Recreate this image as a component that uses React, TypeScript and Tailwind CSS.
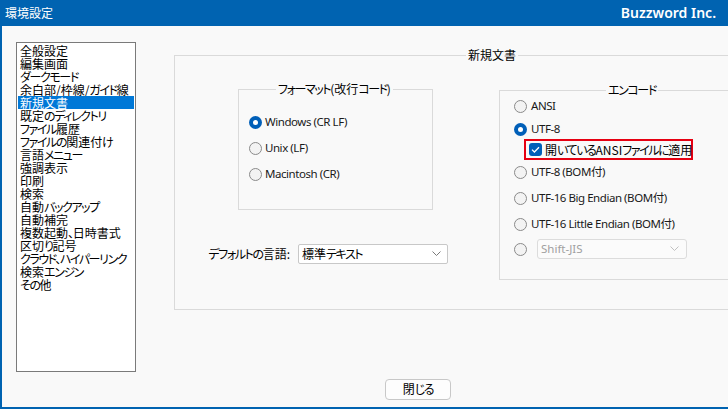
import React from "react";

const jp = "font-['Noto_Sans_CJK_JP',sans-serif] [font-feature-settings:'palt']";
const lat = "font-['Noto_Sans','Noto_Sans_CJK_JP',sans-serif]";

function J({ t, lh = "leading-[13px]" }: { t: string; lh?: string }) {
  const parts = t.split(/([\u3040-\u30ff、]+)/).filter((p) => p.length > 0);
  return (
    <>
      {parts.map((p, i) =>
        /^[\u3040-\u30ff、]+$/.test(p) ? (
          <span key={i} className={`inline-block align-top tracking-[-1.4px] ${lh}`}>
            {p}
          </span>
        ) : (
          <span key={i} className={`inline-block align-top ${lh}`}>
            {p}
          </span>
        )
      )}
    </>
  );
}

function Radio({ checked }: { checked?: boolean }) {
  return checked ? (
    <span className="w-[13px] h-[13px] rounded-full bg-[#005fb8] flex items-center justify-center shrink-0">
      <span className="w-[5px] h-[5px] rounded-full bg-white" />
    </span>
  ) : (
    <span className="w-[13px] h-[13px] rounded-full border border-[#8a8a8a] bg-[#f3f3f3] shrink-0" />
  );
}

function RadioRow({ label, checked, gap = "gap-[3px]" }: { label: string; checked?: boolean; gap?: string }) {
  return (
    <div className={`flex items-center h-[16px] ${gap}`}>
      <Radio checked={checked} />
      <span className={`text-[11.5px] leading-[16px] tracking-[-0.45px] text-[#1a1a1a] whitespace-nowrap ${lat}`}>{label}</span>
    </div>
  );
}

function Chevron({ color }: { color: string }) {
  return (
    <svg width="9" height="6" viewBox="0 0 9 6" className="shrink-0">
      <path d="M0.5 0.5 L4.5 4.5 L8.5 0.5" fill="none" stroke={color} strokeWidth="1" />
    </svg>
  );
}

const items = [
  "全般設定",
  "編集画面",
  "ダークモード",
  "余白部/枠線/ガイド線",
  "新規文書",
  "既定のディレクトリ",
  "ファイル履歴",
  "ファイルの関連付け",
  "言語メニュー",
  "強調表示",
  "印刷",
  "検索",
  "自動バックアップ",
  "自動補完",
  "複数起動、日時書式",
  "区切り記号",
  "クラウド、ハイパーリンク",
  "検索エンジン",
  "その他",
];

export default function App() {
  return (
    <div className="w-[728px] h-[409px] overflow-hidden flex flex-col bg-[#f9f9f9] border-l-2 border-b-2 border-[#0063b1]">
      <div className="h-[26px] shrink-0 bg-[#0063b1] flex items-center justify-between pl-[3px] pr-[12px]">
        <span className={`text-white text-[12px] leading-[14px] ${jp}`}>環境設定</span>
        <span className="text-white text-[14px] leading-[18px] font-semibold font-['Noto_Sans',sans-serif]">Buzzword Inc.</span>
      </div>
      <div className="flex-1 flex flex-col">
        <div className="flex items-start pt-[16px]">
          <div className="ml-[14px] w-[120px] h-[330px] shrink-0 border border-[#7a7a7a] bg-white p-[1px] flex flex-col">
            {items.map((it, i) => (
              <div
                key={it}
                className={`h-[13px] leading-[13px] text-[12px] pl-[2px] whitespace-nowrap ${jp} ${
                  i === 4 ? "bg-[#0078d7] text-white" : "text-black"
                }`}
              >
                <J t={it} />
              </div>
            ))}
          </div>
          <div className="ml-[38px] mt-[5px] shrink-0">
            <fieldset className="w-[638px] h-[263px] border border-[#dadada]">
              <legend className={`ml-[291px] px-[2px] text-[12px] leading-[16px] text-black ${jp}`}>新規文書</legend>
              <div className="flex items-start">
                <div className="ml-[34px] w-[239px] mt-[18px] flex flex-col shrink-0">
                  <fieldset className="ml-[29px] w-[195px] h-[129px] border border-[#dadada] pl-[10px]">
                    <legend className={`ml-[27px] px-[2px] text-[12px] leading-[16px] text-black ${jp}`}>
                      <J t="フォーマット(改行コード)" lh="leading-[16px]" />
                    </legend>
                    <div className="flex flex-col pt-[17px] gap-[10px]">
                      <RadioRow label="Windows (CR LF)" checked />
                      <RadioRow label="Unix (LF)" />
                      <RadioRow label="Macintosh (CR)" />
                    </div>
                  </fieldset>
                  <div className="mt-[34px] flex items-center justify-end gap-[8px]">
                    <span className={`text-[12px] leading-[16px] text-black whitespace-nowrap ${jp}`}>
                      <J t="デフォルトの言語:" lh="leading-[16px]" />
                    </span>
                    <div className="w-[150px] h-[20px] shrink-0 border border-[#c8c8c8] rounded-[2px] bg-white flex items-center justify-between pl-[3px] pr-[6px]">
                      <span className={`text-[12px] leading-[16px] text-black ${jp}`}>
                        <J t="標準テキスト" lh="leading-[16px]" />
                      </span>
                      <Chevron color="#7a7a7a" />
                    </div>
                  </div>
                </div>
                <fieldset className="ml-[51px] mt-[19px] w-[300px] h-[198px] shrink-0 border border-[#dadada] pl-[14px]">
                  <legend className={`ml-[92px] px-[2px] text-[12px] leading-[16px] text-black ${jp}`}>
                    <J t="エンコード" lh="leading-[16px]" />
                  </legend>
                  <div className="flex flex-col">
                    <RadioRow label="ANSI" gap="gap-[4px]" />
                    <div className="mt-[7px]">
                      <RadioRow label="UTF-8" checked gap="gap-[4px]" />
                    </div>
                    <div className="mt-[2px] ml-[10px] w-[169px] h-[21px] border-2 border-[#e60012] flex items-center pl-[3px]">
                      <span className="w-[13px] h-[13px] rounded-[3px] bg-[#005fb8] flex items-center justify-center shrink-0">
                        <svg width="9" height="7" viewBox="0 0 9 7">
                          <path d="M1 3.6 L3.4 6 L8 1.2" fill="none" stroke="white" strokeWidth="1.3" />
                        </svg>
                      </span>
                      <span className={`ml-[3px] text-[12px] leading-[16px] text-black whitespace-nowrap ${jp}`}>
                        <J t="開いているANSIファイルに適用" lh="leading-[16px]" />
                      </span>
                    </div>
                    <div className="mt-[4px]">
                      <RadioRow label="UTF-8 (BOM付)" gap="gap-[4px]" />
                    </div>
                    <div className="mt-[10px]">
                      <RadioRow label="UTF-16 Big Endian (BOM付)" gap="gap-[4px]" />
                    </div>
                    <div className="mt-[10px]">
                      <RadioRow label="UTF-16 Little Endian (BOM付)" gap="gap-[4px]" />
                    </div>
                    <div className="mt-[7px] flex items-center h-[20px]">
                      <Radio />
                      <div className="ml-[10px] w-[150px] h-[20px] border border-[#dcdcdc] rounded-[3px] bg-[#fbfbfb] flex items-center justify-between pl-[3px] pr-[7px]">
                        <span className={`text-[11.5px] leading-[16px] text-[#a0a0a0] ${lat}`}>Shift-JIS</span>
                        <Chevron color="#c0c0c0" />
                      </div>
                    </div>
                  </div>
                </fieldset>
              </div>
            </fieldset>
          </div>
        </div>
        <div className="mt-[4px] ml-[383px]">
          <button className={`w-[66px] h-[21px] border border-[#c8c8c8] rounded-[4px] bg-[#fdfdfd] text-[12px] leading-[16px] text-black ${jp}`}>
            <J t="閉じる" lh="leading-[16px]" />
          </button>
        </div>
      </div>
    </div>
  );
}
